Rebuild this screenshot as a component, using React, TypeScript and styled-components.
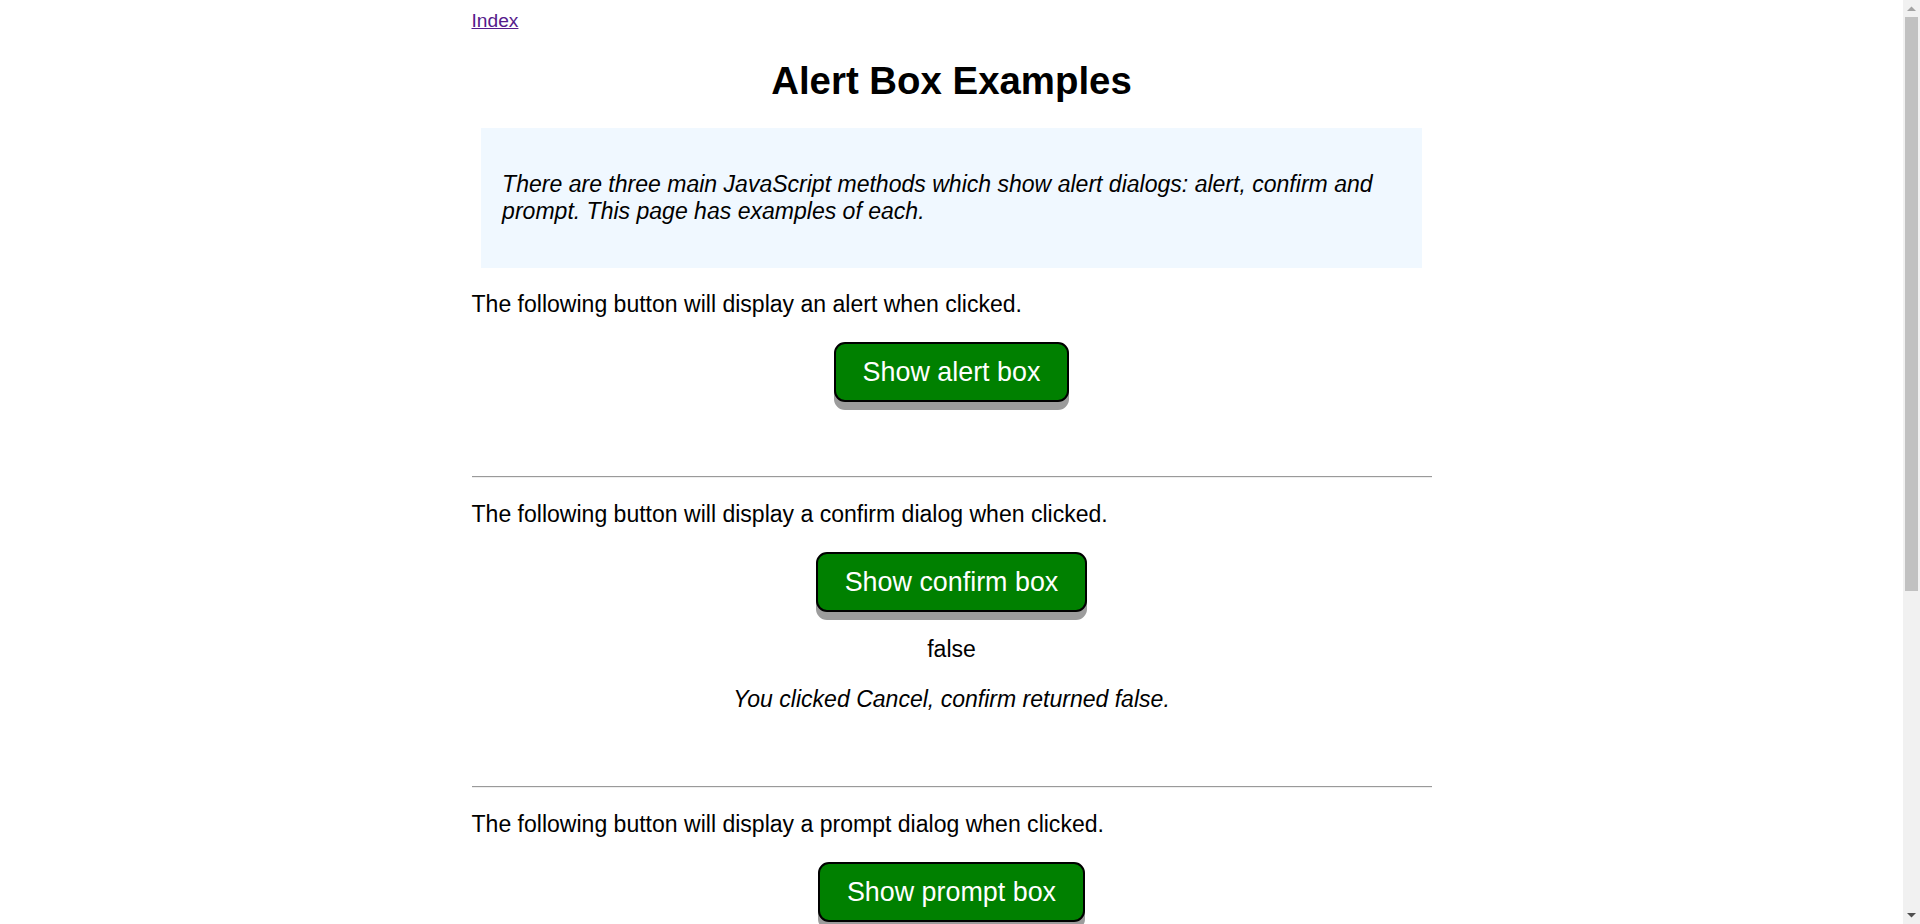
import { FC, useState } from "react";
import styled, { createGlobalStyle, css } from "styled-components";

const GlobalStyle = createGlobalStyle`
  body {
    margin: 8px 25px 8px 8px;
    background: #ffffff;
    color: #000000;
    font-family: "Liberation Sans", Arial, sans-serif;
    font-size: 19.2px;
  }
`;

const Page = styled.div`
  max-width: 960px;
  min-height: 1417px;
  margin: 0 auto;
`;

const Nav = styled.div`
  padding-top: 2px;
  line-height: 22px;
`;

const IndexLink = styled.a`
  color: #551a8b;
  text-decoration: underline;
`;

const Title = styled.h1`
  margin: 26.5px 0 25.5px;
  font-size: 38.4px;
  line-height: 44px;
  font-weight: bold;
  text-align: center;
`;

const Intro = styled.div`
  width: 98%;
  margin: 0 auto;
  padding: 20px 21px;
  box-sizing: border-box;
  background: aliceblue;
`;

const Text = styled.p<{ italic?: boolean; centered?: boolean }>`
  margin: 23px 0;
  font-size: 23.04px;
  line-height: 27px;
  ${({ italic }) =>
    italic &&
    css`
      font-style: italic;
    `}
  ${({ centered }) =>
    centered &&
    css`
      text-align: center;
    `}
`;

const Section = styled.section`
  padding-bottom: 50px;
`;

const ButtonRow = styled.div`
  display: flex;
  justify-content: center;
  margin: 24px 0;
`;

const DialogButton = styled.button`
  padding: 12.5px 26.9px;
  border: 2px solid #000000;
  border-radius: 11px;
  background: #008000;
  box-shadow: 0 8px 0 #9c9c9c;
  color: #ffffff;
  font-family: "Liberation Sans", Arial, sans-serif;
  font-size: 26.88px;
  line-height: 31px;
  cursor: pointer;
`;

const Divider = styled.hr`
  height: 0;
  margin: 0;
  border: 0;
  border-top: 1px solid #9a9a9a;
  border-bottom: 1px solid #eeeeee;
`;

// window scrollbar, drawn over the right edge of the page
const ScrollBar = styled.div`
  position: fixed;
  top: 0;
  right: 0;
  width: 17px;
  height: 100vh;
  display: flex;
  flex-direction: column;
  background: #f1f1f1;
`;

const ScrollArrow = styled.div`
  height: 17px;
  display: flex;
  align-items: center;
  justify-content: center;
  flex-shrink: 0;
`;

const ScrollTrack = styled.div`
  flex: 1;
  padding: 0 2px;
`;

const ScrollThumb = styled.div`
  height: 574px;
  background: #c1c1c1;
`;

const Arrow: FC<{ down?: boolean; color: string }> = ({ down, color }) => (
  <svg width="9" height="5" viewBox="0 0 9 5">
    <polygon
      points={down ? "0,0 9,0 4.5,4.5" : "0,5 9,5 4.5,0.5"}
      fill={color}
    />
  </svg>
);

const App: FC = () => {
  const [confirmResult, setConfirmResult] = useState<boolean>(false);
  const [promptResult, setPromptResult] = useState<string | null>(null);

  const handleAlert = () => {
    window.alert("This is an alert box");
  };

  const handleConfirm = () => {
    setConfirmResult(window.confirm("Are you sure?"));
  };

  const handlePrompt = () => {
    setPromptResult(window.prompt("Enter some text"));
  };

  return (
    <>
      <GlobalStyle />
      <Page>
        <Nav>
          <IndexLink href="#">Index</IndexLink>
        </Nav>
        <Title>Alert Box Examples</Title>
        <Intro>
          <Text italic>
            There are three main JavaScript methods which show alert dialogs:
            alert, confirm and prompt. This page has examples of each.
          </Text>
        </Intro>

        <Section>
          <Text>The following button will display an alert when clicked.</Text>
          <ButtonRow>
            <DialogButton onClick={handleAlert}>Show alert box</DialogButton>
          </ButtonRow>
        </Section>
        <Divider />

        <Section>
          <Text>
            The following button will display a confirm dialog when clicked.
          </Text>
          <ButtonRow>
            <DialogButton onClick={handleConfirm}>Show confirm box</DialogButton>
          </ButtonRow>
          <Text centered>{String(confirmResult)}</Text>
          <Text italic centered>
            You clicked {confirmResult ? "OK" : "Cancel"}, confirm returned{" "}
            {String(confirmResult)}.
          </Text>
        </Section>
        <Divider />

        <Section>
          <Text>
            The following button will display a prompt dialog when clicked.
          </Text>
          <ButtonRow>
            <DialogButton onClick={handlePrompt}>Show prompt box</DialogButton>
          </ButtonRow>
          {promptResult !== null && <Text centered>{promptResult}</Text>}
        </Section>
      </Page>

      <ScrollBar aria-hidden>
        <ScrollArrow>
          <Arrow color="#a3a3a3" />
        </ScrollArrow>
        <ScrollTrack>
          <ScrollThumb />
        </ScrollTrack>
        <ScrollArrow>
          <Arrow down color="#505050" />
        </ScrollArrow>
      </ScrollBar>
    </>
  );
};

export default App;
